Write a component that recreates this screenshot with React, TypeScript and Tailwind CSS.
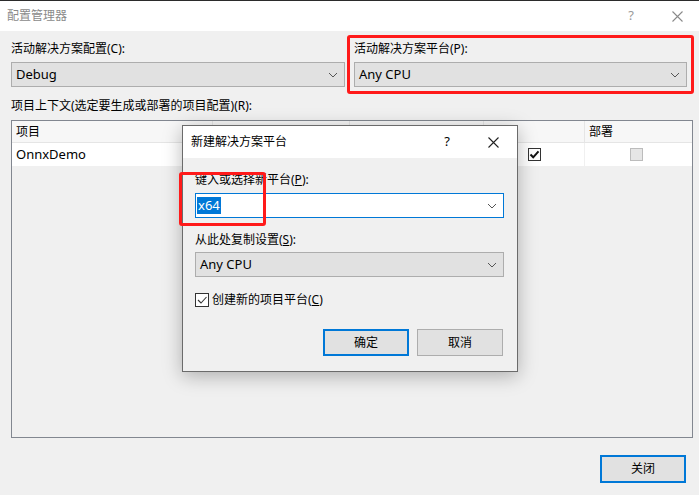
import React from "react";

const font = "font-['Segoe_UI','Noto_Sans','Noto_Sans_CJK_SC',sans-serif]";

function Chevron({ color = "#555" }: { color?: string }) {
  return (
    <svg width="10" height="6" viewBox="0 0 10 6" className="shrink-0">
      <path d="M1 1 L5 5 L9 1" fill="none" stroke={color} strokeWidth="1" />
    </svg>
  );
}

function CloseX({ color = "#333", size = 11 }: { color?: string; size?: number }) {
  return (
    <svg width={size} height={size} viewBox="0 0 11 11">
      <path d="M0.5 0.5 L10.5 10.5 M10.5 0.5 L0.5 10.5" stroke={color} strokeWidth="1.1" fill="none" />
    </svg>
  );
}

function Select({ text, w }: { text: string; w: string }) {
  return (
    <div className={`${w} h-[25px] bg-[#e1e1e1] border border-[#adadad] flex items-center justify-between pl-[4px] pr-[6px]`}>
      <span className="text-[13px] text-black">{text}</span>
      <Chevron />
    </div>
  );
}

export default function App() {
  return (
    <div className={`${font} relative w-[699px] h-[495px] bg-[#f0f0f0] flex flex-col overflow-hidden text-[12px] text-black`}>
      <div className="h-[1px] bg-[#2b2b2b]" />
      <div className="h-[30px] bg-white flex items-center pl-[7px] pr-[16px]">
        <span className="text-[12px] text-[#8a8a8a] flex-1">配置管理器</span>
        <span className="text-[13px] text-[#9a9a9a] mr-[38px]">?</span>
        <CloseX color="#8a8a8a" size={11} />
      </div>

      <div className="flex flex-col pl-[11px] pr-[6px]">
        <div className="flex mt-[10px] gap-[9px]">
          <div className="flex flex-col w-[334px]">
            <span className="leading-[16px] h-[16px]">活动解决方案配置(C):</span>
            <div className="mt-[5px]">
              <Select text="Debug" w="w-[334px]" />
            </div>
          </div>
          <div className="flex flex-col w-[332px]">
            <span className="leading-[16px] h-[16px]">活动解决方案平台(P):</span>
            <div className="mt-[5px]">
              <Select text="Any CPU" w="w-[333px]" />
            </div>
          </div>
        </div>

        <span className="leading-[16px] h-[16px] mt-[11px]">项目上下文(选定要生成或部署的项目配置)(R):</span>

        <div className="mt-[6px] w-[682px] h-[318px] border border-[#828790] bg-[#f0f0f0] flex flex-col">
          <div className="h-[22px] bg-[#f7f7f7] border-b border-[#e5e5e5] flex">
            <div className="w-[201px] border-r border-[#e5e5e5] pl-[4px] flex items-center">项目</div>
            <div className="w-[137px] border-r border-[#e5e5e5] pl-[4px] flex items-center">配置</div>
            <div className="w-[134px] border-r border-[#e5e5e5] pl-[4px] flex items-center">平台</div>
            <div className="w-[101px] border-r border-[#e5e5e5] pl-[4px] flex items-center">生成</div>
            <div className="flex-1 pl-[4px] flex items-center">部署</div>
          </div>
          <div className="h-[23px] bg-white flex">
            <div className="w-[201px] border-r border-[#f0f0f0] pl-[4px] flex items-center text-[13px]">OnnxDemo</div>
            <div className="w-[137px] border-r border-[#f0f0f0]" />
            <div className="w-[134px] border-r border-[#f0f0f0]" />
            <div className="w-[101px] border-r border-[#f0f0f0] flex items-center justify-center">
              <div className="w-[13px] h-[13px] border border-[#333] bg-white flex items-center justify-center">
                <svg width="11" height="11" viewBox="0 0 11 11">
                  <path d="M1.5 5.5 L4.2 8.3 L9.5 2.3" fill="none" stroke="#111" strokeWidth="2" />
                </svg>
              </div>
            </div>
            <div className="flex-1 flex items-center justify-center">
              <div className="w-[13px] h-[13px] border border-[#bcbcbc] bg-[#e6e6e6] ml-[-4px]" />
            </div>
          </div>
        </div>

        <div className="flex justify-end mt-[17px] pr-[7px]">
          <div className="w-[86px] h-[28px] border-2 border-[#0078d7] bg-[#e1e1e1] flex items-center justify-center">关闭</div>
        </div>
      </div>

      {/* red highlight on main platform */}
      <div className="absolute left-[347px] top-[35px] w-[347px] h-[59px] border-[3px] border-[#ff1a1a] rounded-[3px]" />

      {/* dialog */}
      <div className="absolute left-[182px] top-[125px] w-[336px] h-[247px] border border-[#6b6b6b] bg-[#f0f0f0] shadow-[0_4px_18px_rgba(0,0,0,0.28)] flex flex-col">
        <div className="h-[32px] bg-white flex items-center pl-[8px] pr-[18px]">
          <span className="flex-1 text-[12px]">新建解决方案平台</span>
          <span className="text-[13px] mr-[38px]">?</span>
          <CloseX color="#222" size={11} />
        </div>
        <div className="flex flex-col pl-[12px] pr-[14px]">
          <span className="mt-[14px] leading-[16px] h-[16px]">键入或选择新平台(<span className="underline">P</span>):</span>
          <div className="mt-[5px] w-[309px] h-[25px] bg-white border border-[#0078d7] flex items-center justify-between pl-[1px] pr-[6px]">
            <span className="bg-[#0078d7] text-white text-[13px] leading-[17px] px-[1px]">x64</span>
            <Chevron />
          </div>
          <span className="mt-[14px] leading-[16px] h-[16px]">从此处复制设置(<span className="underline">S</span>):</span>
          <div className="mt-[4px]">
            <Select text="Any CPU" w="w-[309px]" />
          </div>
          <div className="mt-[15px] flex items-center gap-[3px]">
            <div className="w-[14px] h-[14px] border border-[#333] bg-white flex items-center justify-center">
              <svg width="12" height="12" viewBox="0 0 12 12">
                <path d="M2 6 L5 9 L10.5 3" fill="none" stroke="#333" strokeWidth="1.1" />
              </svg>
            </div>
            <span className="leading-[16px]">创建新的项目平台(<span className="underline">C</span>)</span>
          </div>
          <div className="mt-[21px] flex justify-end gap-[8px]">
            <div className="w-[86px] h-[27px] border-2 border-[#0078d7] bg-[#e1e1e1] flex items-center justify-center">确定</div>
            <div className="w-[86px] h-[27px] border border-[#adadad] bg-[#e1e1e1] flex items-center justify-center">取消</div>
          </div>
        </div>
      </div>

      {/* red highlight on dialog field */}
      <div className="absolute left-[179px] top-[172px] w-[87px] h-[54px] border-[3px] border-[#ff1a1a] rounded-[3px]" />
    </div>
  );
}
